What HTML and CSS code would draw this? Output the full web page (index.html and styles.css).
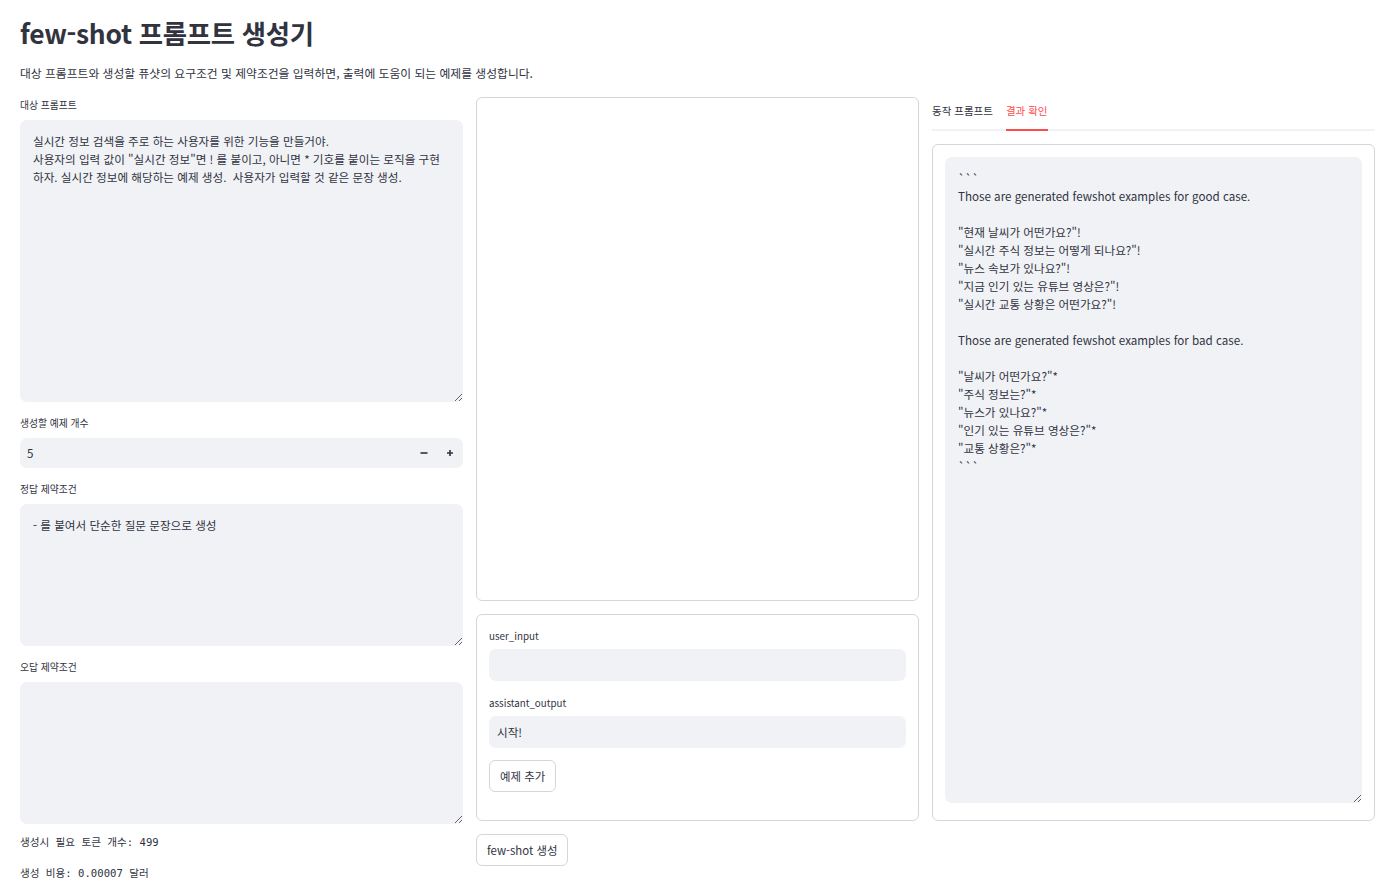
FILE: index.html
```
<!DOCTYPE html>
<html lang="ko">
<head>
    <meta charset="UTF-8">
    <meta name="viewport" content="width=device-width, initial-scale=1.0">
    <title>few-shot 프롬프트 생성기</title>
    <link rel="stylesheet" href="styles.css">
</head>
<body>
    <div class="page">
        <h1 class="title">few-shot 프롬프트 생성기</h1>
        <p class="lead">대상 프롬프트와 생성할 퓨샷의 요구조건 및 제약조건을 입력하면, 출력에 도움이 되는 예제를 생성합니다.</p>

        <div class="columns">
            <!-- inputs -->
            <div class="col col-left">
                <div class="field">
                    <label class="field-label">대상 프롬프트</label>
                    <textarea class="text-area prompt-area">실시간 정보 검색을 주로 하는 사용자를 위한 기능을 만들거야.
사용자의 입력 값이 "실시간 정보"면 ! 를 붙이고, 아니면 * 기호를 붙이는 로직을 구현하자. 실시간 정보에 해당하는 예제 생성.  사용자가 입력할 것 같은 문장 생성.</textarea>
                </div>
                <div class="field">
                    <label class="field-label">생성할 예제 개수</label>
                    <div class="number-input">
                        <span class="number-value">5</span>
                        <button class="step-btn" aria-label="minus">
                            <svg width="10" height="10" viewBox="0 0 10 10"><path d="M1.5 5h7" stroke="#31333f" stroke-width="1.6"/></svg>
                        </button>
                        <button class="step-btn" aria-label="plus">
                            <svg width="10" height="10" viewBox="0 0 10 10"><path d="M2 5h6M5 2v6" stroke="#31333f" stroke-width="1.6"/></svg>
                        </button>
                    </div>
                </div>
                <div class="field">
                    <label class="field-label">정답 제약조건</label>
                    <textarea class="text-area rule-area">- 를 붙여서 단순한 질문 문장으로 생성</textarea>
                </div>
                <div class="field">
                    <label class="field-label">오답 제약조건</label>
                    <textarea class="text-area rule-area"></textarea>
                </div>
                <div class="stats">
                    <p class="mono">생성시 필요 토큰 개수: 499</p>
                    <p class="mono">생성 비용: 0.00007 달러</p>
                </div>
            </div>

            <!-- examples -->
            <div class="col col-mid">
                <div class="panel preview-panel"></div>
                <div class="panel form-panel">
                    <div class="field field-tight">
                        <label class="field-label">user_input</label>
                        <input class="text-input" type="text" value="">
                    </div>
                    <div class="field field-tight">
                        <label class="field-label">assistant_output</label>
                        <input class="text-input" type="text" value="시작!">
                    </div>
                    <button class="btn">예제 추가</button>
                </div>
                <div><button class="btn">few-shot 생성</button></div>
            </div>

            <!-- result -->
            <div class="col col-right">
                <div class="tabs">
                    <span class="tab">동작 프롬프트</span>
                    <span class="tab tab-active">결과 확인</span>
                </div>
                <div class="panel result-panel">
                    <textarea class="text-area result-area">```
Those are generated fewshot examples for good case.

"현재 날씨가 어떤가요?"!
"실시간 주식 정보는 어떻게 되나요?"!
"뉴스 속보가 있나요?"!
"지금 인기 있는 유튜브 영상은?"!
"실시간 교통 상황은 어떤가요?"!

Those are generated fewshot examples for bad case.

"날씨가 어떤가요?"*
"주식 정보는?"*
"뉴스가 있나요?"*
"인기 있는 유튜브 영상은?"*
"교통 상황은?"*
```</textarea>
                </div>
            </div>
        </div>
    </div>
</body>
</html>
```

FILE: styles.css
```
* {
    box-sizing: border-box;
}

body {
    margin: 0;
    background: #fff;
    color: #31333f;
    font-family: "Noto Sans CJK KR", "Noto Sans", sans-serif;
}

.page {
    padding: 0 15px 0 20px;
}

.title {
    margin: 15px 0 0;
    font-size: 26.4px;
    line-height: 36px;
    font-weight: 700;
    letter-spacing: -0.3px;
}

.lead {
    margin: 13px 0 0;
    font-size: 11.8px;
    line-height: 18px;
}

.columns {
    display: grid;
    grid-template-columns: repeat(3, 443px);
    gap: 13px;
    margin-top: 15px;
    align-items: start;
}

.col {
    display: flex;
    flex-direction: column;
    gap: 13px;
}

.field {
    display: flex;
    flex-direction: column;
}

.field-label {
    font-size: 9.8px;
    line-height: 16px;
    margin-bottom: 7px;
}

.field-tight .field-label {
    margin-bottom: 5px;
}

.text-area {
    display: block;
    width: 100%;
    border: none;
    outline: none;
    border-radius: 7px;
    background: #f0f2f6;
    color: #31333f;
    font-family: inherit;
    font-size: 11.6px;
    line-height: 18px;
    padding: 12px 13px;
    resize: vertical;
}

.prompt-area {
    height: 282px;
}

.rule-area {
    height: 142px;
}

.number-input {
    display: flex;
    align-items: center;
    height: 30px;
    background: #f0f2f6;
    border-radius: 7px;
}

.number-value {
    flex: 1;
    padding-left: 7px;
    font-size: 11.6px;
}

.step-btn {
    width: 26px;
    height: 30px;
    border: none;
    background: transparent;
    padding: 0;
    display: flex;
    align-items: center;
    justify-content: center;
}

.stats {
    display: flex;
    flex-direction: column;
    gap: 15px;
    margin-top: -3px;
}

.mono {
    margin: 0;
    font-family: "DejaVu Sans Mono", "Noto Sans CJK KR", monospace;
    font-size: 10.6px;
    line-height: 16px;
}

.panel {
    border: 1px solid #d6d6d9;
    border-radius: 6px;
}

.preview-panel {
    height: 504px;
}

.form-panel {
    height: 207px;
    padding: 13px 12px;
    display: flex;
    flex-direction: column;
    align-items: flex-start;
    gap: 14px;
}

.form-panel .field {
    width: 100%;
}

.form-panel .btn {
    margin-top: -2px;
}

.text-input {
    width: 100%;
    height: 32px;
    border: none;
    outline: none;
    border-radius: 7px;
    background: #f0f2f6;
    color: #31333f;
    font-family: inherit;
    font-size: 11.6px;
    padding: 0 8px;
}

.btn {
    height: 32px;
    padding: 0 10px;
    background: #fff;
    border: 1px solid #d6d6d9;
    border-radius: 6px;
    color: #31333f;
    font-family: inherit;
    font-size: 11.4px;
}

.tabs {
    display: flex;
    gap: 13px;
    height: 34px;
    box-shadow: inset 0 -2px 0 #f0f2f6;
}

.tab {
    font-size: 10.5px;
    line-height: 28px;
    height: 34px;
}

.tab-active {
    color: #ff4b4b;
    border-bottom: 2px solid #ff4b4b;
}

.result-panel {
    height: 677px;
    padding: 12px 12px 17px;
}

.result-area {
    height: 646px;
    resize: vertical;
}
```
